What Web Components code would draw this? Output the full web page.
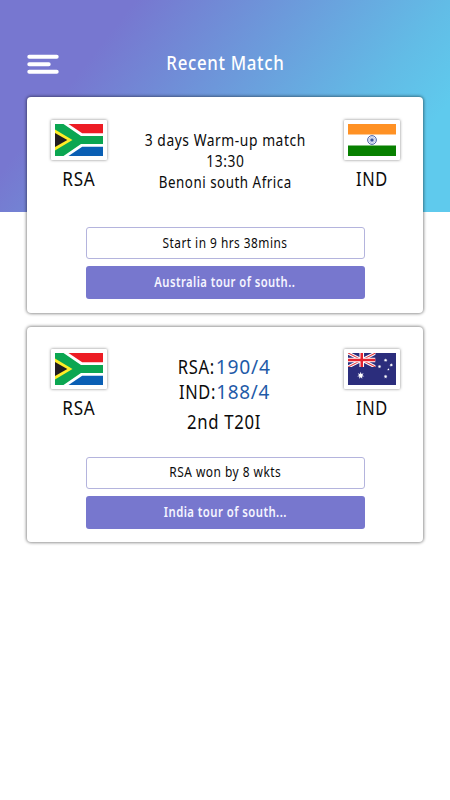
<!DOCTYPE html>
<html lang="en"><head><meta charset="utf-8"><title>Recent Match</title>
<style>
html,body{margin:0;background:#fff}
body{font-family:"Noto Sans","Open Sans",sans-serif;color:#0b0b0b}
.score{color:#1f5ba8}
.title{font-weight:500}
</style></head><body>
<cricket-screen>
  <fit-text class="title" slot="title" width="118" size="19.5" line="28">Recent Match</fit-text>
  <match-card>
    <team-badge slot="home" flag="rsa"><fit-text width="33" size="19.5" line="24">RSA</fit-text></team-badge>
    <fit-text slot="info" width="161" size="15.5" line="21">3 days Warm-up match</fit-text>
    <fit-text slot="info" width="38" size="15.5" line="21">13:30</fit-text>
    <fit-text slot="info" width="133" size="15.5" line="21">Benoni south Africa</fit-text>
    <team-badge slot="away" flag="ind"><fit-text width="32" size="19.5" line="24">IND</fit-text></team-badge>
    <pill-button slot="actions"><fit-text width="125" size="13.5" line="30">Start in 9 hrs 38mins</fit-text></pill-button>
    <pill-button slot="actions" solid><fit-text width="141" size="13.5" line="32">Australia tour of south..</fit-text></pill-button>
  </match-card>
  <match-card scores>
    <team-badge slot="home" flag="rsa"><fit-text width="33" size="19.5" line="24">RSA</fit-text></team-badge>
    <score-line slot="info"><fit-text width="37" size="19" line="25">RSA:</fit-text><fit-text class="score" width="55" size="19" line="25">190/4</fit-text></score-line>
    <score-line slot="info"><fit-text width="37" size="19" line="25">IND:</fit-text><fit-text class="score" width="54" size="19" line="25">188/4</fit-text></score-line>
    <fit-text slot="info" width="74" size="19" line="34">2nd T20I</fit-text>
    <team-badge slot="away" flag="aus"><fit-text width="32" size="19.5" line="24">IND</fit-text></team-badge>
    <pill-button slot="actions"><fit-text width="112" size="13.5" line="28">RSA won by 8 wkts</fit-text></pill-button>
    <pill-button slot="actions" solid><fit-text width="123" size="13.5" line="32">India tour of south...</fit-text></pill-button>
  </match-card>
</cricket-screen>
<script>
const define=(name,html,setup)=>customElements.define(name,class extends HTMLElement{
  connectedCallback(){
    if(this.shadowRoot)return;
    this.attachShadow({mode:'open'}).innerHTML=html;
    if(setup)setup(this,this.shadowRoot);
  }
});
const star=(x,y,r,n)=>{let p='';for(let i=0;i<n*2;i++){const a=-Math.PI/2+i*Math.PI/n,q=i%2?r*.45:r;p+=(x+q*Math.cos(a)).toFixed(2)+','+(y+q*Math.sin(a)).toFixed(2)+' '}return `<polygon fill="#fff" points="${p}"/>`};
const spokes=Array.from({length:12},(_,i)=>`<path d="M24 16V11.8" transform="rotate(${i*30} 24 16)"/>`).join('');
const flags={
rsa:`<path fill="#fff" d="M0 0h48v32H0z"/><path fill="#ed1c24" d="M13.5 0H48V9.3H27.2z"/><path fill="#0a5fb4" d="M13.5 32H48V22.7H27.2z"/><path fill="#0ba651" d="M0 0H8.5L26 12H48V20H26L8.5 32H0z"/><path fill="#ffed27" d="M0 5.5L17.5 16L0 26.5z"/><path fill="#211c20" d="M0 9L12.3 16L0 23z"/>`,
ind:`<path fill="#fff" d="M0 0h48v32H0z"/><path fill="#ff9124" d="M0 0h48v10.5H0z"/><path fill="#078000" d="M0 21.5h48V32H0z"/><circle cx="24" cy="16" r="4.4" fill="#eef1fc" stroke="#3d559d" stroke-width=".9"/><g stroke="#7084bd" stroke-width=".35">${spokes}</g><circle cx="24" cy="16" r="1.6" fill="#3d559d"/>`,
aus:`<path fill="#2b2d7c" d="M0 0h48v32H0z"/><svg width="27.5" height="14" viewBox="0 0 27.5 14"><path stroke="#fff" stroke-width="3.2" d="M0 0L27.5 14M27.5 0L0 14"/><path stroke="#e2383f" stroke-width="1.1" d="M0 0L27.5 14M27.5 0L0 14"/><path stroke="#fff" stroke-width="4.6" d="M13.75 0V14M0 7H27.5"/><path stroke="#e5232e" stroke-width="2.5" d="M13.75 0V14M0 7H27.5"/></svg>${star(12.7,22.5,3.7,7)}${star(37.6,7.2,2,7)}${star(31.5,13.6,1.9,7)}${star(43.3,12,1.9,7)}${star(40.4,16.4,1.3,5)}${star(37.6,23.6,2,7)}`};
define('flag-image',`<style>
:host{display:block;width:56px;height:40px;box-sizing:border-box;padding:4px;background:#fff;border-radius:1px;box-shadow:0 0 3px rgba(0,0,0,.5)}
svg{display:block}</style><svg width="48" height="32" viewBox="0 0 48 32"></svg>`,(el,root)=>{root.querySelector('svg').innerHTML=flags[el.getAttribute('name')]});
define('menu-icon',`<style>:host,svg{display:block}</style>
<svg width="32" height="20" viewBox="0 0 32 20" stroke="#fff" stroke-width="4" stroke-linecap="round"><path d="M2.3 2.8H29.7M2.3 10.2H21.7M2.3 17.8H29.7"/></svg>`);
define('cricket-screen',`<style>
:host{display:block;width:450px;height:800px;overflow:hidden;box-sizing:border-box;background:linear-gradient(128deg,#7777d0 0%,#7777d0 22%,#6c9adb 48%,#62bce6 73%,#5fcaed 86%,#5fcaed 100%) 0 0/450px 212px no-repeat #fff}
header{height:97px;box-sizing:border-box;padding:49px 27px 0;display:grid;grid-template-columns:32px 1fr 32px;color:#fff}
menu-icon{margin-top:5px}
.t{display:flex;justify-content:center}
main{display:flex;flex-direction:column;gap:14px;padding:0 27px}
</style><header><menu-icon></menu-icon><div class="t"><slot name="title"></slot></div></header><main><slot></slot></main>`);
define('match-card',`<style>
:host{display:block;height:216px;box-sizing:border-box;padding:23px 23px 0 24px;background:#fff;border-radius:4px;box-shadow:0 0 3px 1px rgba(0,0,0,.42)}
:host([scores]){height:215px;padding-top:22px}
.teams{display:grid;grid-template-columns:56px 1fr 56px;height:107px}
:host([scores]) .teams{height:108px}
.info{display:flex;flex-direction:column;align-items:center;padding:10px 0 0}
:host([scores]) .info{padding:6px 2px 0 0}
.actions{width:279.5px;margin-left:34.5px;display:flex;flex-direction:column;gap:7px}
</style><div class="teams"><slot name="home"></slot><div class="info"><slot name="info"></slot></div><slot name="away"></slot></div><div class="actions"><slot name="actions"></slot></div>`);
define('score-line',`<style>:host{display:flex;gap:1px}</style><slot></slot>`);
define('pill-button',`<style>
:host{display:flex;justify-content:center;height:32.4px;box-sizing:border-box;border:1px solid #b4b4dd;border-radius:3px;background:#fff}
:host([solid]){background:#7777ce;border:0;color:#f5f4ff;font-weight:600}
</style><slot></slot>`);
define('team-badge',`<style>
:host{display:flex;flex-direction:column;align-items:center;gap:7px}
.name{padding-right:.5px}
</style><div class="flag"></div><div class="name"><slot></slot></div>`,(el,root)=>{root.querySelector('.flag').innerHTML=`<flag-image name="${el.getAttribute('flag')}"></flag-image>`});
// Condenses a single line of text to a given width. Registered last so that
// the inherited font weight is settled before the line is measured.
define('fit-text',`<style>
:host{display:flex;justify-content:center;white-space:nowrap}
span{flex:none;display:inline-block;letter-spacing:.04em}
</style><span><slot></slot></span>`,(el,root)=>{
  const s=root.querySelector('span'),w=+el.getAttribute('width');
  el.style.width=w+'px';
  s.style.fontSize=el.getAttribute('size')+'px';
  s.style.lineHeight=el.getAttribute('line')+'px';
  s.style.transform='scaleX('+w/s.getBoundingClientRect().width+')';
});
</script>
</body></html>
